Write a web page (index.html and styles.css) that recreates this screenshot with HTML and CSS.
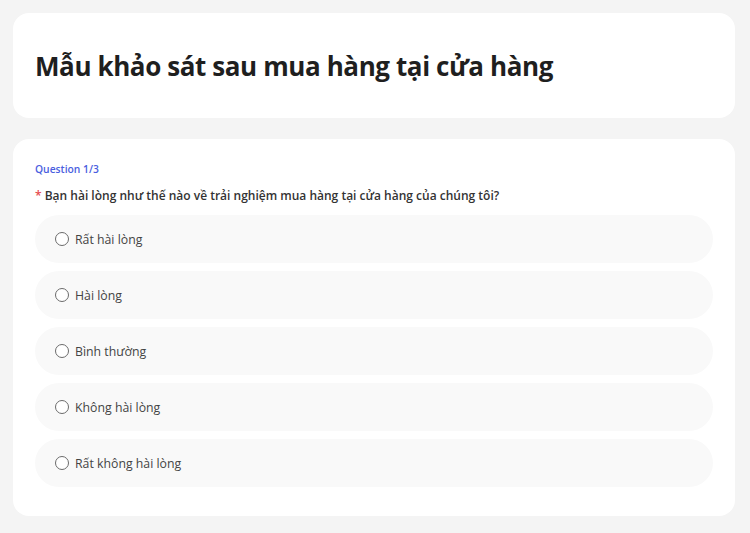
FILE: index.html
```html
<!DOCTYPE html>
<html lang="vi">
<head>
<meta charset="utf-8">
<title>Khảo sát</title>
<link rel="stylesheet" href="styles.css">
</head>
<body>
<div class="page">
  <header class="card title-card">
    <h1 class="title">Mẫu khảo sát sau mua hàng tại cửa hàng</h1>
  </header>
  <section class="card question-card">
    <div class="q-index">Question 1/3</div>
    <div class="q-text"><span class="req">*</span> Bạn hài lòng như thế nào về trải nghiệm mua hàng tại cửa hàng của chúng tôi?</div>
    <div class="options">
      <label class="option"><span class="radio"></span><span class="opt-label">Rất hài lòng</span></label>
      <label class="option"><span class="radio"></span><span class="opt-label">Hài lòng</span></label>
      <label class="option"><span class="radio"></span><span class="opt-label">Bình thường</span></label>
      <label class="option"><span class="radio"></span><span class="opt-label">Không hài lòng</span></label>
      <label class="option"><span class="radio"></span><span class="opt-label">Rất không hài lòng</span></label>
    </div>
  </section>
</div>
</body>
</html>
```
FILE: styles.css
```css
* { box-sizing: border-box; }
html, body { margin: 0; padding: 0; }
body {
  background: #f4f4f4;
  font-family: "Open Sans", "Noto Sans", sans-serif;
  color: #333;
}
.page {
  padding: 13px 15px 13px 13px;
  display: flex;
  flex-direction: column;
  gap: 21px;
}
.card {
  background: #fff;
  border-radius: 16px;
}
.title-card {
  height: 105px;
  padding: 0 22px;
  display: flex;
  align-items: center;
}
.title {
  margin: 0;
  font-size: 26px;
  font-weight: 700;
  color: #1f1f1f;
  letter-spacing: -0.4px;
}
.question-card {
  padding: 22px 22px 29px 22px;
}
.q-index {
  font-size: 10.3px;
  font-weight: 600;
  color: #4a5ee0;
  line-height: 16px;
}
.q-text {
  margin-top: 10px;
  font-size: 12px;
  font-weight: 600;
  color: #333;
  line-height: 18px;
}
.req { color: #e5484d; }
.options {
  margin-top: 10px;
  display: flex;
  flex-direction: column;
  gap: 8px;
}
.option {
  height: 48px;
  background: #f9f9f9;
  border-radius: 24px;
  display: flex;
  align-items: center;
  padding-left: 20px;
  gap: 6px;
}
.radio {
  width: 14px;
  height: 14px;
  border: 1.2px solid #6b6b6b;
  border-radius: 50%;
  background: #fff;
}
.opt-label {
  font-size: 12.3px;
  color: #444;
}
```
